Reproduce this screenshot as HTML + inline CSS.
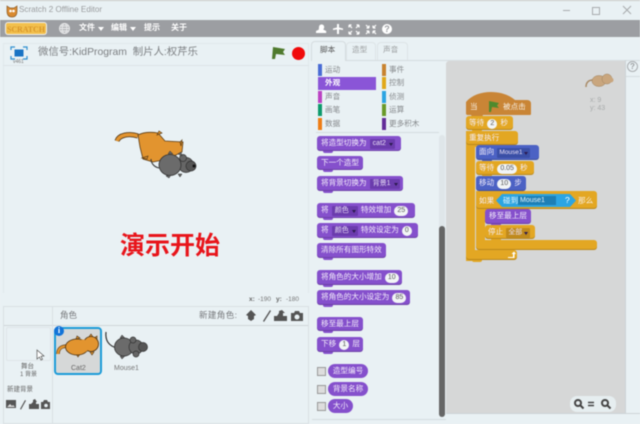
<!DOCTYPE html>
<html><head><meta charset="utf-8"><style>
html,body{margin:0;padding:0;width:640px;height:424px;overflow:hidden;background:#e9f1f4}
#r{position:relative;width:640px;height:424px;overflow:hidden;background:#e9f1f4;filter:blur(.45px);font-family:"Liberation Sans","Noto Sans CJK SC",sans-serif}
#r div,#r span.t,#r svg{position:absolute}
.t{white-space:nowrap;line-height:1}
.m{color:#fff;font-size:8px;font-weight:bold;top:24px}
.c{width:4px;height:12px}
.l{font-size:7.6px;color:#85888b;white-space:nowrap;line-height:12px}
.b{border-radius:3px;color:#f4eefb;font-size:7.6px;line-height:14px;white-space:nowrap;padding-left:4px;box-sizing:border-box;box-shadow:inset 0 -1px 0 rgba(0,0,0,.18)}
.b:after{content:"";position:absolute;left:6px;bottom:-2px;width:10px;height:2.5px;background:inherit;border-radius:0 0 3px 3px}
.p{background:#8550cc}.y{background:#e3a723}.o{background:#c98536}.u{background:#4c62c4}
.n{position:relative;display:inline-block;background:#f2f5f6;color:#555;border-radius:5px;padding:0 3px;line-height:10px;font-size:7px;vertical-align:0;margin:0 1px}
.d{position:relative;display:inline-block;background:#6b3cad;color:#e8def6;border-radius:1px;padding:0 9px 0 3px;line-height:10px;font-size:7px;vertical-align:0;margin:0 1px}
.d:after{content:"";position:absolute;right:2px;top:4px;border:2.5px solid transparent;border-top:3px solid #2c1a50;border-bottom:0}
.rp{background:#8550cc;border-radius:8px;color:#f4eefb;font-size:7.6px;line-height:14px;text-align:center}
.ck{width:7px;height:7px;background:#ddd;border:1px solid #999;left:317px}
</style></head><body><div id="r">

<div style="left:0;top:0;width:640px;height:1px;background:#c9c9c6"></div>
<!-- title -->
<svg style="left:6px;top:5px" width="12" height="13" viewBox="0 0 12 13"><path d="M1 1l3 2h4l3-2v5c0 4-2 6-5 6s-5-2-5-6z" fill="#d98a30" stroke="#8a5a25" stroke-width=".7"/><circle cx="4.500" cy="6" r="1.300" fill="#fff"/><circle cx="7.500" cy="6" r="1.300" fill="#fff"/></svg>
<span class="t" style="left:19px;top:6px;font-size:8.100px;color:#9a9c9e">Scratch 2 Offline Editor</span>
<div style="left:563px;top:10px;width:7px;height:1px;background:#a8abad"></div>
<div style="left:592px;top:7px;width:6px;height:6px;border:1px solid #a8abad"></div>
<svg style="left:622px;top:5px" width="10" height="10"><path d="M1 1l8 8M9 1l-8 8" stroke="#a8abad" stroke-width="1"/></svg>

<!-- menu -->
<div style="left:0;top:20px;width:640px;height:17px;background:#9c9ea2"></div>
<div style="left:6px;top:23px;width:40px;height:11px;background:#f2c04d;border-radius:2px;box-shadow:0 0 0 1px #eee;overflow:hidden"><span class="t" style="position:absolute;left:1px;top:1.500px;font:bold 8px 'Liberation Serif',serif;color:#d9962a;letter-spacing:-.1px">SCRATCH</span></div>
<svg style="left:59px;top:23px" width="11" height="11" viewBox="0 0 11 11" fill="none" stroke="#e8e9ea" stroke-width=".9"><circle cx="5.500" cy="5.500" r="5" fill="#b5b7ba"/><ellipse cx="5.500" cy="5.500" rx="2.300" ry="5"/><path d="M.5 5.500h10M1.200 3h8.600M1.200 8h8.600"/></svg>
<span class="t m" style="left:79px">文件</span><svg style="left:98px;top:27px" width="6" height="4"><path d="M0 0h6L3 4z" fill="#fff"/></svg>
<span class="t m" style="left:111px">编辑</span><svg style="left:130px;top:27px" width="6" height="4"><path d="M0 0h6L3 4z" fill="#fff"/></svg>
<span class="t m" style="left:144px">提示</span>
<span class="t m" style="left:171px">关于</span>
<svg style="left:315px;top:22px" width="75" height="14" viewBox="0 0 75 14" fill="#fff"><path d="M4 5a2.600 2.600 0 1 1 5.200 0c0 1.300-.6 2-1 2.500l3 1.500v2H1v-2l3-1.500C3.600 7 4 6.300 4 5z"/><path d="M22 2h2v3.500l4 1v1.500l-4-.6V12h-2V7.400L18 8V6.500l4-1z"/><path d="M34 3l3 3M34 3h2.500M34 3v2.500M44 3l-3 3M44 3h-2.500M44 3v2.500M34 12l3-3M34 12h2.500M34 12V9.500M44 12l-3-3M44 12h-2.500M44 12V9.500" stroke="#fff" stroke-width="1.200" fill="none"/><path d="M51 3l3 3M54 6H51.500M54 6V3.500M61 3l-3 3M58 6h2.500M58 6V3.500M51 12l3-3M54 9H51.500M54 9v2.500M61 12l-3-3M58 9h2.500M58 9v2.500" stroke="#fff" stroke-width="1.200" fill="none"/></svg>
<div style="left:382px;top:24px;width:10px;height:10px;border-radius:50%;background:#fff;color:#9c9ea2;font:bold 9px/10px 'Liberation Sans';text-align:center">?</div>

<!-- stage header -->
<div style="left:3px;top:43px;width:306px;height:250px;border:1px solid #e1e8eb;border-bottom:0;box-sizing:border-box"></div>
<div style="left:3px;top:65px;width:306px;height:1px;background:#dde4e7"></div>
<svg style="left:10px;top:46px" width="18" height="14" viewBox="0 0 18 14" fill="none" stroke="#2f8fd0" stroke-width="1.200"><rect x="4.500" y="3.500" width="9" height="7" fill="#1873c4" stroke="none"/><path d="M1 4V1h4M13 1h4v3M1 10v3h4M13 13h4v-3"/></svg>
<span class="t" style="left:13px;top:60px;font-size:5px;color:#777">v461</span>
<span class="t" style="left:38px;top:48px;font-size:10.400px;color:#7c7f82">微信号:KidProgram&nbsp; 制片人:权芹乐</span>
<svg style="left:271px;top:46px" width="15" height="14" viewBox="0 0 15 14"><path d="M2 1l12 2-2 3 2 3-9-1-1 5H1z" fill="#4f7a2d"/></svg>
<div style="left:292px;top:47px;width:13px;height:13px;border-radius:50%;background:#f00a0a"></div>

<!-- stage sprites -->
<svg style="left:110px;top:125px" width="95" height="60" viewBox="110 125 95 60">
<path d="M117 141c2-6 12-8 21-5" fill="none" stroke="#4a3010" stroke-width="5"/>
<path d="M117 141c2-6 12-8 21-5" fill="none" stroke="#e2942f" stroke-width="3.500"/>
<path d="M138 135c6-3 14-3 20-2l7 8 18 1-1 10-14 7-15 3-10-3-3-12z" fill="#e2942f" stroke="#5c3c14" stroke-width=".8"/>
<path d="M157 135l2-4 3 2zM180 142l2-2-1 6zM142 158l6-2-1 3z" fill="#e2942f" stroke="#5c3c14" stroke-width=".7"/>
<path d="M151 159c0 4 3 8 8 9" fill="none" stroke="#333" stroke-width="1"/>
<circle cx="186" cy="165" r="7.500" fill="#666" stroke="#333" stroke-width=".7"/>
<circle cx="191" cy="166" r="5" fill="#555" stroke="#333" stroke-width=".7"/>
<circle cx="183" cy="158" r="3.500" fill="#666" stroke="#333" stroke-width=".7"/>
<ellipse cx="170" cy="165" rx="11" ry="10.500" fill="#6b6b6b" stroke="#333" stroke-width=".8"/>
<circle cx="194" cy="166" r="1.500" fill="#111"/>
<path d="M168 154l2-3 3 3zM178 154l3-2 1 4zM166 176l3 2 2-3zM178 174l2 3 2-3z" fill="#666" stroke="#333" stroke-width=".5"/>
</svg>
<span class="t" style="left:120px;top:234px;font-size:25px;font-weight:bold;color:#e8141a">演示开始</span>

<span class="t" style="left:249px;top:297px;font-size:6.500px;font-weight:bold;color:#666">x:</span>
<span class="t" style="left:258px;top:297px;font-size:6.500px;color:#777">-190</span>
<span class="t" style="left:276px;top:297px;font-size:6.500px;font-weight:bold;color:#666">y:</span>
<span class="t" style="left:286px;top:297px;font-size:6.500px;color:#777">-180</span>

<!-- sprites pane -->
<div style="left:3px;top:306px;width:306px;height:118px;border:1px solid #d9e0e3;box-sizing:border-box"></div>
<div style="left:4px;top:325px;width:304px;height:1px;background:#cfd6d9"></div>
<div style="left:52px;top:306px;width:1px;height:118px;background:#d9e0e3"></div>
<span class="t" style="left:60px;top:311px;font-size:8.500px;color:#77797c">角色</span>
<span class="t" style="left:199px;top:311px;font-size:8.500px;color:#77797c;letter-spacing:.4px">新建角色:</span>
<svg style="left:245px;top:309px" width="60" height="14" viewBox="0 0 60 14" fill="#555"><path d="M6 1l5 5-2 1v3l-3 2-3-2V7L1 6z"/><path d="M18 12l7-11 1 1-7 11z"/><path d="M29 7h3l2-3V2l3-1 3 3h-2v3h4v5H29z"/><path d="M46 4h3l1-2h4l1 2h3v8H46z"/><circle cx="52" cy="8" r="2.500" fill="#e9f1f4"/></svg>
<div style="left:6px;top:327px;width:45px;height:34px;border:1px solid #dfe5e8;box-sizing:border-box;border-radius:2px"></div>
<svg style="left:36px;top:349px" width="9" height="12"><path d="M1 1v9l2.500-2 1.500 3 1.500-.7-1.500-3 3-.3z" fill="#fff" stroke="#555" stroke-width=".7"/></svg>
<span class="t" style="left:21px;top:364px;font-size:6.500px;color:#666">舞台</span>
<span class="t" style="left:20px;top:372px;font-size:6px;color:#666">1 背景</span>
<span class="t" style="left:7px;top:387px;font-size:6.500px;color:#666">新建背景</span>
<svg style="left:6px;top:399px" width="46" height="11" viewBox="0 0 46 11" fill="#555"><rect x="0" y="1" width="10" height="8"/><path d="M1 8l3-3 2 2 1-1 2 2z" fill="#ddd"/><path d="M14 10l5-9 1 .6-5 9z"/><path d="M23 5h2l2-2V1l2-1 2 3h-1v2h3v5H23z"/><path d="M35 3h2l1-2h3l1 2h2v7H35z"/><circle cx="40" cy="6.500" r="1.800" fill="#e9f1f4"/></svg>

<div style="left:54px;top:327px;width:48px;height:48px;background:#d6d8d8;border:2px solid #1c9bd8;border-radius:4px;box-sizing:border-box"></div>
<div style="left:54px;top:326px;width:10px;height:10px;border-radius:50%;background:#1273d8;color:#fff;font:bold 8px/10px 'Liberation Serif',serif;text-align:center">i</div>
<svg style="left:54px;top:327px" width="48" height="36" viewBox="54 327 48 36">
<path d="M58 354c0-6 4-8 10-8" fill="none" stroke="#5c3c14" stroke-width="3.500"/>
<path d="M58 354c0-6 4-8 10-8" fill="none" stroke="#e2942f" stroke-width="2.200"/>
<path d="M76 339l1-3 3 2zM88 338l3-4 2 3zM94 338l3-2v4zM76 354l2 3 2-3zM90 352l2 3 2-3z" fill="#e2942f" stroke="#4a3010" stroke-width=".6"/>
<ellipse cx="77" cy="347" rx="11.500" ry="8" fill="#e2942f" stroke="#4a3010" stroke-width=".8"/>
<circle cx="91" cy="344" r="7.500" fill="#e2942f" stroke="#4a3010" stroke-width=".8"/>
<ellipse cx="83" cy="346" rx="6" ry="6.500" fill="#e2942f"/>
</svg>
<span class="t" style="left:71px;top:365px;font-size:7px;color:#666">Cat2</span>
<svg style="left:103px;top:328px" width="47" height="36" viewBox="103 328 47 36">
<path d="M106 332c-1 9 3 14 11 16" fill="none" stroke="#333" stroke-width="1.200"/>
<ellipse cx="124" cy="347" rx="9.500" ry="9" fill="#6b6b6b" stroke="#333" stroke-width=".8"/>
<circle cx="136" cy="347" r="7" fill="#666" stroke="#333" stroke-width=".7"/>
<circle cx="143" cy="347" r="4.500" fill="#555" stroke="#333" stroke-width=".7"/>
<circle cx="133" cy="340" r="3" fill="#666" stroke="#333" stroke-width=".7"/>
<circle cx="136" cy="354" r="3" fill="#666" stroke="#333" stroke-width=".7"/>
<path d="M120 338l2-3 3 3zM120 356l2 3 3-3z" fill="#666" stroke="#333" stroke-width=".5"/>
</svg>
<span class="t" style="left:114px;top:365px;font-size:7px;color:#777">Mouse1</span>

<!-- tabs -->
<div style="left:311px;top:60px;width:329px;height:1px;background:#d5dcdf"></div>
<div style="left:311px;top:41px;width:35px;height:20px;background:#e9f1f4;border:1px solid #d5dcdf;border-bottom:0;border-radius:4px 4px 0 0;box-sizing:border-box"></div>
<div style="left:346px;top:42px;width:30px;height:18px;border:1px solid #dde4e7;border-bottom:0;border-radius:4px 4px 0 0;box-sizing:border-box"></div>
<div style="left:377px;top:42px;width:31px;height:18px;border:1px solid #dde4e7;border-bottom:0;border-radius:4px 4px 0 0;box-sizing:border-box"></div>
<span class="t" style="left:320px;top:46px;font-size:7.600px;color:#555">脚本</span>
<span class="t" style="left:352px;top:46px;font-size:7.600px;color:#9a9d9f">造型</span>
<span class="t" style="left:383px;top:46px;font-size:7.600px;color:#9a9d9f">声音</span>

<!-- categories -->
<div class="c" style="left:318px;top:64px;background:#4a6cd4"></div><div class="l" style="left:325px;top:64px">运动</div>
<div class="c" style="left:318px;top:77px;width:58px;height:13px;background:#8a55d7"></div><div class="l" style="left:325px;top:77px;color:#fff;font-weight:bold">外观</div>
<div class="c" style="left:318px;top:91px;background:#bb42c3"></div><div class="l" style="left:325px;top:91px">声音</div>
<div class="c" style="left:318px;top:104px;background:#0e9a6c"></div><div class="l" style="left:325px;top:104px">画笔</div>
<div class="c" style="left:318px;top:118px;background:#ee7d16"></div><div class="l" style="left:325px;top:118px">数据</div>
<div class="c" style="left:382px;top:64px;background:#c88330"></div><div class="l" style="left:389px;top:64px">事件</div>
<div class="c" style="left:382px;top:77px;background:#e1a91a"></div><div class="l" style="left:389px;top:77px">控制</div>
<div class="c" style="left:382px;top:91px;background:#2ca5e2"></div><div class="l" style="left:389px;top:91px">侦测</div>
<div class="c" style="left:382px;top:104px;background:#6a9a2a"></div><div class="l" style="left:389px;top:104px">运算</div>
<div class="c" style="left:382px;top:118px;background:#632d99"></div><div class="l" style="left:389px;top:118px">更多积木</div>
<div style="left:316px;top:132px;width:123px;height:1px;background:#d5dcdf"></div>

<!-- palette -->
<div class="b p" style="left:317px;top:136px;width:84px;height:15px">将造型切换为 <span class="d">cat2</span></div>
<div class="b p" style="left:317px;top:156px;width:46px;height:14px">下一个造型</div>
<div class="b p" style="left:317px;top:176px;width:86px;height:15px">将背景切换为 <span class="d">背景1</span></div>
<div class="b p" style="left:317px;top:203px;width:98px;height:15px">将 <span class="d">颜色</span> 特效增加 <span class="n">25</span></div>
<div class="b p" style="left:317px;top:223px;width:101px;height:15px">将 <span class="d">颜色</span> 特效设定为 <span class="n">0</span></div>
<div class="b p" style="left:317px;top:243px;width:69px;height:15px">清除所有图形特效</div>
<div class="b p" style="left:317px;top:270px;width:85px;height:15px">将角色的大小增加 <span class="n">10</span></div>
<div class="b p" style="left:317px;top:290px;width:93px;height:15px">将角色的大小设定为 <span class="n">85</span></div>
<div class="b p" style="left:317px;top:317px;width:46px;height:14px">移至最上层</div>
<div class="b p" style="left:317px;top:337px;width:46px;height:15px">下移 <span class="n">1</span> 层</div>
<div class="ck" style="top:367px"></div><div class="rp" style="left:328px;top:364px;width:40px;height:14px">造型编号</div>
<div class="ck" style="top:385px"></div><div class="rp" style="left:328px;top:382px;width:40px;height:14px">背景名称</div>
<div class="ck" style="top:402px"></div><div class="rp" style="left:328px;top:399px;width:25px;height:14px">大小</div>
<div style="left:439px;top:135px;width:6px;height:282px;background:#dfe6e9;border-radius:3px"></div>
<div style="left:439px;top:226px;width:6px;height:191px;background:#666;border-radius:3px"></div>
<div style="left:312px;top:419px;width:134px;height:1px;background:#d5dcdf"></div>

<!-- script area -->
<div style="left:446px;top:61px;width:179px;height:352px;background:#d6d7d7;border-radius:3px 0 0 0"></div>
<div style="left:625px;top:60px;width:1px;height:354px;background:#cdd4d7"></div>
<div style="left:446px;top:413px;width:194px;height:1px;background:#cdd4d7"></div>
<div style="left:627px;top:61px;width:11px;height:11px;border:1px solid #a9adb0;border-radius:50%;box-sizing:border-box;color:#9a9d9f;font:bold 8px/9px 'Liberation Sans';text-align:center">?</div>
<div style="left:626px;top:76px;width:14px;height:1px;background:#d5dcdf"></div>

<svg style="left:585px;top:72px" width="30" height="17" viewBox="0 0 30 17"><path d="M1 15c0-5 3-7 7-7" fill="none" stroke="#a98a66" stroke-width="1.500"/><ellipse cx="14" cy="9" rx="7" ry="5.500" fill="#c9a67e" stroke="#a08460" stroke-width=".5"/><circle cx="22" cy="7" r="5" fill="#c9a67e" stroke="#a08460" stroke-width=".5"/><circle cx="26" cy="8" r="2.500" fill="#c9a67e"/></svg>
<span class="t" style="left:590px;top:97px;font-size:7px;color:#a8abab">x: 9</span>
<span class="t" style="left:590px;top:105px;font-size:7px;color:#a8abab">y: 43</span>

<!-- script -->
<div style="left:466px;top:131px;width:9px;height:130px;background:#e3a723"></div>
<div style="left:476px;top:191px;width:9px;height:55px;background:#e3a723"></div>
<svg style="left:466px;top:91px" width="66" height="26" viewBox="0 0 66 26"><path d="M0 23V11C6 4 15 1 25 1c10 0 18 3 24 8h12q4 0 4 4v10q0 1-1 1H17l-1 2H6l-1-2H1z" fill="#c98536"/></svg>
<svg style="left:487px;top:100px" width="14" height="13" viewBox="0 0 14 13"><path d="M2 1l10 2-2 2.500L12 8 5 7l-1 5H2z" fill="#4f8a2d"/></svg>
<span class="t" style="left:470px;top:103px;font-size:7.600px;color:#f7efe4">当</span>
<span class="t" style="left:503px;top:103px;font-size:7.600px;color:#f7efe4">被点击</span>
<div class="b y" style="left:466px;top:116px;width:47px;height:14px;padding-left:3px">等待 <span class="n">2</span> 秒</div>
<div class="b y" style="left:466px;top:131px;width:52px;height:14px;padding-left:3px">重复执行</div>
<div class="b u" style="left:476px;top:145px;width:63px;height:15px;padding-left:3px">面向 <span class="d" style="background:#3a4fa6;padding:0 8px 0 2px;font-size:6.500px">Mouse1</span></div>
<div class="b y" style="left:476px;top:161px;width:58px;height:14px;padding-left:3px">等待 <span class="n">0.05</span> 秒</div>
<div class="b u" style="left:476px;top:176px;width:50px;height:15px;padding-left:3px">移动 <span class="n">10</span> 步</div>
<div class="b y" style="left:476px;top:191px;width:121px;height:18px;padding-left:3px;line-height:19px">如果</div>
<svg style="left:496px;top:194px" width="80" height="13" viewBox="0 0 80 13"><path d="M6 0h68l6 6.500-6 6.500H6L0 6.500z" fill="#2ca5e2"/><rect x="22" y="2" width="38" height="9" fill="#1d7fb5"/></svg>
<span class="t" style="left:503px;top:197px;font-size:7.600px;color:#eaf6fc">碰到</span>
<span class="t" style="left:520px;top:197px;font-size:7px;color:#e3f2fa">Mouse1</span>
<span class="t" style="left:565px;top:196px;font-size:8.500px;color:#fff">?</span>
<span class="t" style="left:578px;top:197px;font-size:7.600px;color:#f7efe4">那么</span>
<div class="b p" style="left:485px;top:209px;width:46px;height:15px">移至最上层</div>
<div class="b y" style="left:485px;top:225px;width:50px;height:14px;padding-left:3px">停止 <span class="d" style="background:#c08a1c;padding:0 8px 0 2px">全部</span></div>
<div class="b y" style="left:476px;top:240px;width:121px;height:10px"></div>
<div class="b y" style="left:466px;top:250px;width:51px;height:10px"></div>
<svg style="left:507px;top:251px" width="9" height="8"><path d="M1 6h5V3H4.500L7 .5 9 3H7.500v4H1z" fill="#fff"/></svg>

<!-- zoom -->
<div style="left:570px;top:396px;width:46px;height:16px;background:#e6eef0;border-radius:7px"></div>
<svg style="left:573px;top:398px" width="41" height="12" viewBox="0 0 41 12" fill="none" stroke="#444"><circle cx="5" cy="5" r="3" stroke-width="2"/><path d="M7.500 7.500l3 3" stroke-width="2"/><path d="M15 4.500h6M15 7.500h6" stroke-width="1.500"/><circle cx="32" cy="5" r="3" stroke-width="2"/><path d="M34.500 7.500l3 3" stroke-width="2"/></svg>
</div></body></html>
